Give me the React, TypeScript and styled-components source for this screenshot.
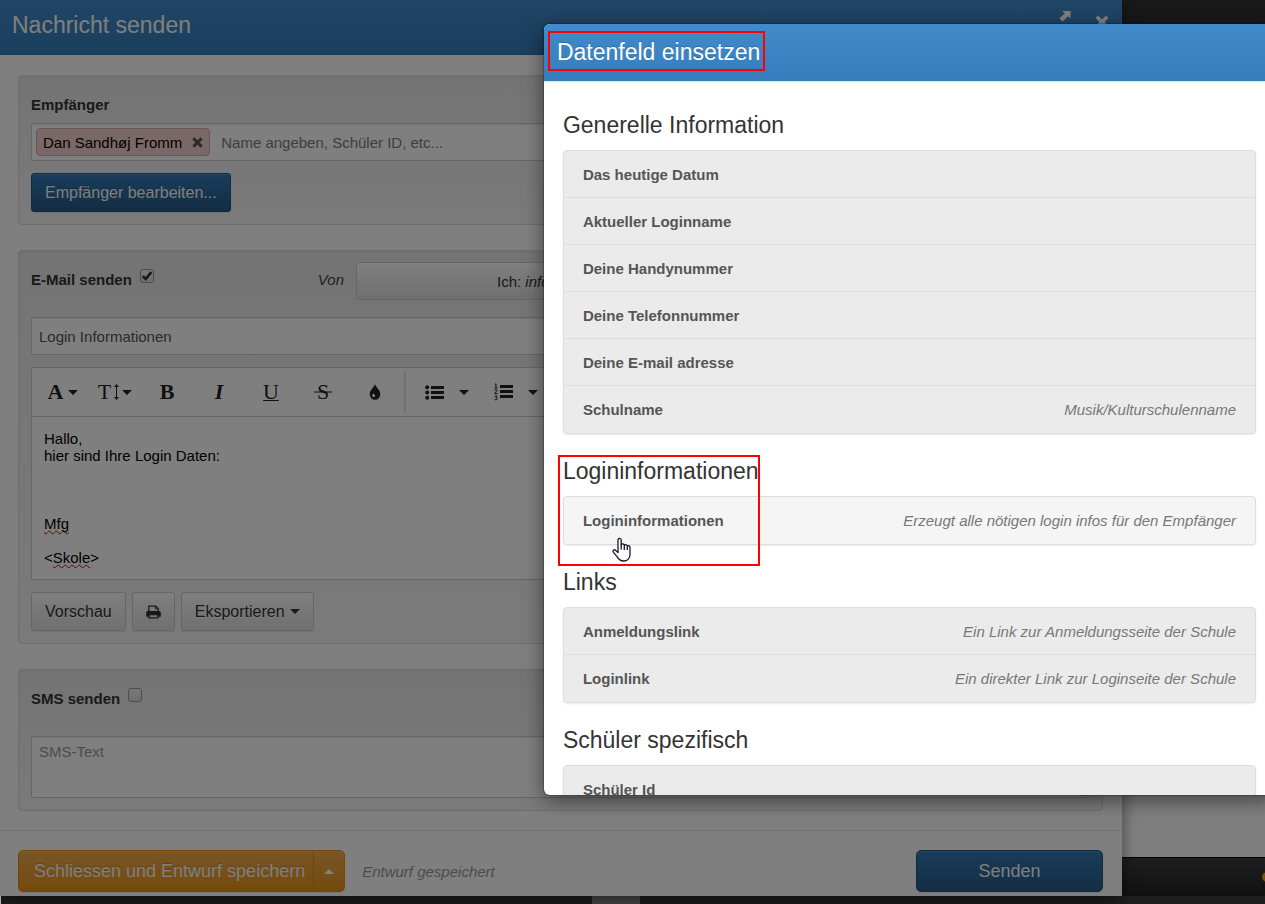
import React from "react";
import styled, { createGlobalStyle, css } from "styled-components";

const GlobalStyle = createGlobalStyle`
  *, *::before, *::after { box-sizing: border-box; }
  body {
    margin: 0;
    font-family: "Liberation Sans", Arial, sans-serif;
    font-size: 15px;
    line-height: 21px;
    color: #333;
    background: #1f1f1f;
  }
  button, input, textarea { font-family: inherit; font-size: inherit; }
`;

const Page = styled.div`
  display: flex;
  flex-direction: column;
  min-height: 100vh;
  overflow: hidden;
`;

const Stage = styled.div`
  position: relative;
  flex: 1;
  display: grid;
  grid-template-columns: minmax(0, 1fr) 143px;
  background: #fff;
`;

const Backdrop = styled.div`
  position: absolute;
  inset: 0;
  background: rgba(0, 0, 0, 0.5);
`;

/* ---------- page behind the windows ---------- */

const SiteColumn = styled.div`
  display: flex;
  flex-direction: column;
  justify-content: space-between;
  overflow: hidden;
`;

const SiteTop = styled.div`
  height: 56px;
  background: #323232;
`;

const SiteBottom = styled.div`
  display: flex;
  align-items: center;
  justify-content: flex-end;
  height: 39px;
  border-top: 1px solid #000;
  background: linear-gradient(#3e3e3e, #222);
`;

const StatusDot = styled.span`
  width: 10px;
  height: 10px;
  margin-right: -7px;
  border-radius: 5px;
  background: #f0a020;
`;

const Taskbar = styled.div`
  display: flex;
  justify-content: center;
  height: 8px;
  border-left: 1px solid #ccc;
  background: #1f1f1f;
`;

const TaskbarItem = styled.span`
  width: 48px;
  margin-right: 34px;
  background: #4b4b4b;
`;

/* ---------- message window ---------- */

const Window = styled.section`
  position: relative;
  display: flex;
  flex-direction: column;
  background: #fff;
  box-shadow: 0 5px 15px rgba(0, 0, 0, 0.5);
`;

const WindowHeader = styled.header`
  display: flex;
  justify-content: space-between;
  height: 55px;
  padding: 10px 13px 10px 12px;
  background: linear-gradient(#428bca, #357ebd);
  border-bottom: 1px solid #3577ac;
`;

const titleText = css`
  margin: 0;
  font-size: 23px;
  font-weight: 400;
  color: #fff;
`;

const WindowTitle = styled.h1`
  ${titleText}
  line-height: 30px;
`;

const WindowTools = styled.div`
  display: flex;
  align-items: flex-start;
  gap: 24px;
`;

const ToolButton = styled.button<{ $drop?: number }>`
  display: flex;
  margin: 0;
  padding: ${(p) => p.$drop ?? 0}px 0 0;
  border: 0;
  background: none;
  color: #fff;
`;

const WindowBody = styled.div`
  flex: 1;
  display: flex;
  flex-direction: column;
  gap: 25px;
  padding: 20px 19px 19px 18px;
`;

const Well = styled.div<{ $top?: number }>`
  display: flex;
  flex-direction: column;
  gap: 12px;
  padding: ${(p) => p.$top ?? 11}px 11px 12px 12px;
  border: 1px solid #dcdcdc;
  border-radius: 4px;
  background: linear-gradient(#e8e8e8, #f5f5f5);
  box-shadow: inset 0 1px 3px rgba(0, 0, 0, 0.05);
`;

const FieldGroup = styled.div`
  display: flex;
  flex-direction: column;
  gap: 8px;
`;

const FieldLabel = styled.label`
  font-weight: 700;
`;

const boxed = css`
  border: 1px solid #ccc;
  border-radius: 2px;
  background: #fff;
  box-shadow: inset 0 1px 1px rgba(0, 0, 0, 0.075);
`;

const TokenField = styled.div`
  ${boxed}
  display: flex;
  align-items: center;
  height: 38px;
  padding: 0 4px;
`;

const Token = styled.span`
  display: flex;
  align-items: center;
  gap: 10px;
  height: 28px;
  padding: 0 6px;
  border: 1px solid #d3aeac;
  border-radius: 4px;
  background: #f5d0ce;
  color: #000;
`;

const TokenRemove = styled.button`
  display: flex;
  padding: 0;
  border: 0;
  background: none;
  color: #555;
`;

const TokenInput = styled.input`
  flex: 1;
  min-width: 0;
  padding: 0 11px;
  border: 0;
  outline: 0;
  background: none;
  &::placeholder { color: #7c7c7c; }
`;

type Tone = "plain" | "primary" | "warning";

const tones = {
  plain: css`
    color: #333;
    border-color: #ccc;
    background: linear-gradient(#fff, #e0e0e0);
    text-shadow: 0 1px 0 #fff;
  `,
  primary: css`
    color: #fff;
    border-color: #245580;
    background: linear-gradient(#337ab7, #265a88);
    text-shadow: 0 -1px 0 rgba(0, 0, 0, 0.2);
  `,
  warning: css`
    color: #fff;
    border-color: #e38d13;
    background: linear-gradient(#f0ad4e, #eb9316);
    text-shadow: 0 -1px 0 rgba(0, 0, 0, 0.2);
  `,
};

const Button = styled.button<{ $tone: Tone; $large?: boolean }>`
  display: inline-flex;
  align-items: center;
  justify-content: center;
  gap: 5px;
  height: ${(p) => (p.$large ? 42 : 39)}px;
  padding: 0 ${(p) => (p.$large ? 15 : 13)}px;
  border: 1px solid;
  border-radius: ${(p) => (p.$large ? 5 : 3)}px;
  font-size: ${(p) => (p.$large ? 18 : 16)}px;
  white-space: nowrap;
  box-shadow: inset 0 1px 0 rgba(255, 255, 255, 0.15), 0 1px 1px rgba(0, 0, 0, 0.075);
  ${(p) => tones[p.$tone]}
`;

const ButtonRow = styled.div`
  display: flex;
  gap: 6px;
`;

const SwitchRow = styled.div`
  display: grid;
  grid-template-columns: minmax(0, 313px) minmax(0, 1fr);
  gap: 12px;
  min-height: 38px;
  margin-bottom: 5px;
`;

const SwitchLabels = styled.div`
  display: flex;
  justify-content: space-between;
  padding-top: 7px;
`;

const CheckLabel = styled.label`
  display: flex;
  align-items: flex-start;
  gap: 8px;
  font-weight: 700;
`;

const CheckWrap = styled.span`
  position: relative;
  display: flex;
  width: 14px;
  height: 14px;

  svg {
    position: absolute;
    left: 1px;
    top: 1px;
    pointer-events: none;
  }
`;

const CheckInput = styled.input`
  appearance: none;
  width: 14px;
  height: 14px;
  margin: 0;
  border: 1px solid #999;
  border-radius: 3px;
  background: linear-gradient(#f2f2f2, #dcdcdc);
`;

const SenderLabel = styled.em`
  color: #444;
`;

const SenderButton = styled.button`
  height: 38px;
  padding: 0 140px;
  border: 1px solid #ccc;
  border-radius: 2px;
  background: linear-gradient(#fff, #e0e0e0);
  color: #333;
  text-align: left;
`;

const TextInput = styled.input`
  ${boxed}
  width: 100%;
  height: 38px;
  padding: 0 7px;
  color: #555;
`;

const Editor = styled.div`
  border: 1px solid #ccc;
  border-radius: 2px;
  background: #fff;
`;

const Toolbar = styled.div`
  display: flex;
  align-items: center;
  height: 49px;
  padding-left: 5px;
  border-bottom: 1px solid #ccc;
  overflow: hidden;
`;

const FormatButton = styled.button<{ $wide?: boolean; $gap?: number }>`
  display: flex;
  flex: none;
  align-items: center;
  justify-content: center;
  gap: ${(p) => p.$gap ?? 5}px;
  width: ${(p) => (p.$wide ? 69 : 52)}px;
  height: 48px;
  padding: 0;
  border: 0;
  background: none;
  color: #222;
`;

const Glyph = styled.span<{ $bold?: boolean; $italic?: boolean; $line?: string }>`
  font-family: "Liberation Serif", "Times New Roman", serif;
  font-size: 22px;
  line-height: 24px;
  font-weight: ${(p) => (p.$bold ? 700 : 400)};
  font-style: ${(p) => (p.$italic ? "italic" : "normal")};
  text-decoration: ${(p) => p.$line ?? "none"};
  text-decoration-thickness: 1px;
`;

const ToolbarDivider = styled.span`
  flex: none;
  width: 2px;
  height: 42px;
  margin: 0 6px 0 3px;
  background: #e4e4e4;
`;

const EditorText = styled.div`
  padding: 13px 12px;
  line-height: 17px;
  color: #000;
  outline: 0;

  p { margin: 0; min-height: 17px; }
`;

const Misspelled = styled.span`
  text-decoration: underline wavy #e00000 1px;
  text-decoration-skip-ink: none;
`;

const TextArea = styled.textarea`
  ${boxed}
  display: block;
  width: 100%;
  height: 62px;
  padding: 4px 7px;
  line-height: 21px;
  &::placeholder { color: #999; }
`;

const WindowFooter = styled.footer`
  display: flex;
  align-items: center;
  gap: 17px;
  padding: 19px 19px 4px 18px;
  border-top: 1px solid #e0e0e0;
`;

const SplitButton = styled.div`
  display: flex;

  button:first-child {
    padding-right: 8px;
    border-radius: 5px 0 0 5px;
  }
  button:last-child {
    width: 32px;
    margin-left: -1px;
    padding: 0;
    border-radius: 0 5px 5px 0;
  }
`;

const DraftState = styled.em`
  flex: 1;
  color: #999;
`;

const SendButton = styled(Button)`
  width: 187px;
`;

/* ---------- data field dialog ---------- */

const Dialog = styled.section`
  position: absolute;
  top: 24px;
  right: -10px;
  bottom: 101px;
  left: 43%;
  display: flex;
  flex-direction: column;
  overflow: hidden;
  border-radius: 6px;
  background: #fff;
  box-shadow: 0 0 0 1px rgba(0, 0, 0, 0.2), 0 5px 20px rgba(0, 0, 0, 0.5);
`;

const DialogHeader = styled.header`
  flex: none;
  display: flex;
  padding: 7px 4px 10px;
  border-bottom: 1px solid #e5e5e5;
  background: linear-gradient(#428bca, #357ebd) padding-box;
`;

const DialogTitle = styled.h2`
  ${titleText}
  padding: 2px 3px 0 7px;
  border: 2px solid #f00;
  line-height: 34px;
  text-shadow: 0 -1px 0 rgba(0, 0, 0, 0.2);
`;

const DialogBody = styled.div`
  display: flex;
  flex-direction: column;
  gap: 22px;
  padding: 28px 19px 0;
`;

const Section = styled.section`
  position: relative;
  flex: none;
`;

const SectionTitle = styled.h3`
  margin: 0 0 10px;
  font-size: 23px;
  font-weight: 400;
  line-height: 30px;
`;

const FieldList = styled.ul`
  margin: 0;
  padding: 0;
  list-style: none;
  border: 1px solid #ddd;
  border-radius: 4px;
  background: #ebebeb;
  box-shadow: 0 1px 2px rgba(0, 0, 0, 0.075);
  overflow: hidden;
`;

const FieldItem = styled.li`
  & + & { box-shadow: 0 -1px 0 #ddd; }
`;

const FieldRow = styled.button<{ $hover?: boolean }>`
  display: flex;
  align-items: center;
  justify-content: space-between;
  width: 100%;
  height: 47px;
  padding: 0 19px;
  border: 0;
  background: ${(p) => (p.$hover ? "#f5f5f5" : "#ebebeb")};
  color: #555;
  cursor: pointer;
`;

const FieldHint = styled.em`
  color: #777;
`;

const Marker = styled.span`
  position: absolute;
  top: -1px;
  left: -5px;
  width: 202px;
  height: 111px;
  border: 2px solid #f00;
  pointer-events: none;
`;

const Pointer = styled.svg`
  position: absolute;
  top: 81px;
  left: 49px;
  pointer-events: none;
`;

/* ---------- icons ---------- */

const Caret = ({ up }: { up?: boolean }) => (
  <svg width="10" height="5" viewBox="0 0 10 5" fill="currentColor" aria-hidden="true">
    <path d={up ? "M0 5 5 0l5 5z" : "M0 0h10L5 5z"} />
  </svg>
);

const CrossIcon = ({ size }: { size: number }) => (
  <svg width={size} height={size} viewBox="0 0 12 12" aria-hidden="true">
    <path d="M1.500 1.500l9 9M10.500 1.500l-9 9" stroke="currentColor" strokeWidth="3.200" fill="none" />
  </svg>
);

const ExpandIcon = () => (
  <svg width="12" height="12" viewBox="0 0 12 12" fill="currentColor" aria-hidden="true">
    <path d="M3.200 1H11.500v7.600L9 6.200 3.600 11.600.400 8.400 5.800 3.200z" />
  </svg>
);

const HeightIcon = () => (
  <svg width="5" height="16" viewBox="0 0 5 16" fill="currentColor" aria-hidden="true">
    <path d="M2.500 0 5 3H3v10h2l-2.500 3L0 13h2V3H0z" />
  </svg>
);

const StrikeIcon = () => (
  <svg width="18" height="2" viewBox="0 0 18 2" aria-hidden="true">
    <path d="M0 1h18" stroke="currentColor" />
  </svg>
);

const StruckGlyph = styled.span`
  display: grid;
  place-items: center;

  > * { grid-area: 1 / 1; }
`;

const DropIcon = () => (
  <svg width="12" height="16" viewBox="0 0 12 16" fill="currentColor" aria-hidden="true">
    <path
      fillRule="evenodd"
      d="M6 0c.8 3.300 5.300 6 5.300 10.300A5.300 5.500 0 0 1 .7 10.300C.7 6 5.200 3.300 6 0zM4.500 9.200c-.7 1-1.300 1.500-1.300 2.400a1.500 1.500 0 0 0 3 0c0-.9-1.200-1.400-1.700-2.400z"
    />
  </svg>
);

const BulletsIcon = () => (
  <svg width="19" height="15" viewBox="0 0 19 15" fill="currentColor" aria-hidden="true">
    <circle cx="2.200" cy="2.200" r="2" />
    <circle cx="2.200" cy="7.500" r="2" />
    <circle cx="2.200" cy="12.800" r="2" />
    <path d="M6 1h13v3H6zM6 6h13v3H6zM6 11h13v3H6z" />
  </svg>
);

const NumbersIcon = () => (
  <svg width="19" height="18" viewBox="0 0 19 18" fill="none" stroke="currentColor" aria-hidden="true">
    <path d="M6 3.500h13M6 8.500h13M6 13.500h13" strokeWidth="3" />
    <path d="M.8 1.500 2 .8V5M.6 5h3M.6 7.300c.5-.8 2.400-.8 2.400.3 0 .8-2.300 1.900-2.300 2.900h3M.7 13h2.400l-1.200 1.500c1.800 0 1.600 2.400 0 2.400-.8 0-1.200-.3-1.400-.7" />
  </svg>
);

const PrintIcon = () => (
  <svg width="15" height="14" viewBox="0 0 16 14" aria-hidden="true">
    <path d="M3 6.500V.7h7.300L13 3.400v3.100" fill="none" stroke="currentColor" strokeWidth="1.400" />
    <path d="M10 .7v3h3" fill="none" stroke="currentColor" />
    <path
      fillRule="evenodd"
      fill="currentColor"
      d="M2 6h12a1.800 1.800 0 0 1 1.800 1.800V12h-2.300v2h-11v-2H.2V7.800A1.800 1.800 0 0 1 2 6zm2 4.500v2.200h8v-2.200z"
    />
  </svg>
);

const CheckMark = () => (
  <svg width="12" height="12" viewBox="0 0 12 12" aria-hidden="true">
    <path d="M1.800 6.200 4.800 9 10.300 2" fill="none" stroke="#333" strokeWidth="2.800" />
  </svg>
);

const HandPointer = () => (
  <Pointer width="20" height="26" viewBox="0 0 20 26" aria-hidden="true">
    <path
      d="M6 15.500V3.200C6 .7 9.200.7 9.200 3.200v4.600c.5-1.300 3-1.200 3.100.5.700-1 2.900-.7 3 .9.800-.8 2.700-.4 2.700 1.200v6.800c0 3.800-2.400 6.800-6.300 6.800-3.600 0-5.200-1.800-6.400-4.100L1.400 15.300c-1.200-2.200 1-3.200 2.300-1.900z"
      fill="#fff"
      stroke="#15152a"
      strokeWidth="1.300"
      strokeLinejoin="round"
    />
    <path d="M9.200 7.500v5M12.300 8.500V13M15.300 9.500V13" stroke="#15152a" strokeWidth="1.300" />
  </Pointer>
);

/* ---------- content ---------- */

type DataField = { name: string; hint?: string; hover?: boolean };
type DataGroup = { title: string; marked?: boolean; fields: DataField[] };

const groups: DataGroup[] = [
  {
    title: "Generelle Information",
    fields: [
      { name: "Das heutige Datum" },
      { name: "Aktueller Loginname" },
      { name: "Deine Handynummer" },
      { name: "Deine Telefonnummer" },
      { name: "Deine E-mail adresse" },
      { name: "Schulname", hint: "Musik/Kulturschulenname" },
    ],
  },
  {
    title: "Logininformationen",
    marked: true,
    fields: [
      {
        name: "Logininformationen",
        hint: "Erzeugt alle nötigen login infos für den Empfänger",
        hover: true,
      },
    ],
  },
  {
    title: "Links",
    fields: [
      { name: "Anmeldungslink", hint: "Ein Link zur Anmeldungsseite der Schule" },
      { name: "Loginlink", hint: "Ein direkter Link zur Loginseite der Schule" },
    ],
  },
  { title: "Schüler spezifisch", fields: [{ name: "Schüler Id" }] },
];

function FormatToolbar() {
  return (
    <Toolbar role="toolbar">
      <FormatButton type="button"><Glyph $bold>A</Glyph><Caret /></FormatButton>
      <FormatButton type="button" $gap={3}><Glyph>T</Glyph><HeightIcon /><Caret /></FormatButton>
      <FormatButton type="button"><Glyph $bold>B</Glyph></FormatButton>
      <FormatButton type="button"><Glyph $bold $italic>I</Glyph></FormatButton>
      <FormatButton type="button"><Glyph $line="underline">U</Glyph></FormatButton>
      <FormatButton type="button">
        <StruckGlyph>
          <Glyph>S</Glyph>
          <StrikeIcon />
        </StruckGlyph>
      </FormatButton>
      <FormatButton type="button"><DropIcon /></FormatButton>
      <ToolbarDivider />
      <FormatButton type="button" $wide $gap={15}><BulletsIcon /><Caret /></FormatButton>
      <FormatButton type="button" $wide $gap={15}><NumbersIcon /><Caret /></FormatButton>
    </Toolbar>
  );
}

function MessageWindow() {
  return (
    <Window>
      <WindowHeader>
        <WindowTitle>Nachricht senden</WindowTitle>
        <WindowTools>
          <ToolButton type="button" aria-label="Vergrößern"><ExpandIcon /></ToolButton>
          <ToolButton type="button" aria-label="Schliessen" $drop={5}><CrossIcon size={14} /></ToolButton>
        </WindowTools>
      </WindowHeader>

      <WindowBody>
        <Well $top={18}>
          <FieldGroup>
            <FieldLabel htmlFor="recipients">Empfänger</FieldLabel>
            <TokenField>
              <Token>
                Dan Sandhøj Fromm
                <TokenRemove type="button" aria-label="Entfernen"><CrossIcon size={11} /></TokenRemove>
              </Token>
              <TokenInput id="recipients" placeholder="Name angeben, Schüler ID, etc..." />
            </TokenField>
          </FieldGroup>
          <ButtonRow>
            <Button type="button" $tone="primary">Empfänger bearbeiten...</Button>
          </ButtonRow>
        </Well>

        <Well>
          <SwitchRow>
            <SwitchLabels>
              <CheckLabel>
                E-Mail senden
                <CheckWrap>
                  <CheckInput type="checkbox" defaultChecked />
                  <CheckMark />
                </CheckWrap>
              </CheckLabel>
              <SenderLabel>Von</SenderLabel>
            </SwitchLabels>
            <SenderButton type="button">Ich: <em>info</em></SenderButton>
          </SwitchRow>
          <TextInput aria-label="Betreff" defaultValue="Login Informationen" />
          <Editor>
            <FormatToolbar />
            <EditorText role="textbox" contentEditable suppressContentEditableWarning spellCheck={false}>
              <p>Hallo,</p>
              <p>hier sind Ihre Login Daten:</p>
              <p />
              <p />
              <p />
              <p><Misspelled>Mfg</Misspelled></p>
              <p />
              <p>&lt;<Misspelled>Skole</Misspelled>&gt;</p>
            </EditorText>
          </Editor>
          <ButtonRow>
            <Button type="button" $tone="plain">Vorschau</Button>
            <Button type="button" $tone="plain" aria-label="Drucken"><PrintIcon /></Button>
            <Button type="button" $tone="plain">Eksportieren <Caret /></Button>
          </ButtonRow>
        </Well>

        <Well>
          <SwitchRow>
            <SwitchLabels>
              <CheckLabel>
                SMS senden
                <CheckWrap>
                  <CheckInput type="checkbox" />
                </CheckWrap>
              </CheckLabel>
            </SwitchLabels>
          </SwitchRow>
          <TextArea aria-label="SMS-Text" placeholder="SMS-Text" />
        </Well>
      </WindowBody>

      <WindowFooter>
        <SplitButton>
          <Button type="button" $tone="warning" $large>Schliessen und Entwurf speichern</Button>
          <Button type="button" $tone="warning" $large aria-label="Mehr"><Caret up /></Button>
        </SplitButton>
        <DraftState>Entwurf gespeichert</DraftState>
        <SendButton type="button" $tone="primary" $large>Senden</SendButton>
      </WindowFooter>
    </Window>
  );
}

function DataFieldDialog() {
  return (
    <Dialog role="dialog" aria-labelledby="data-field-title">
      <DialogHeader>
        <DialogTitle id="data-field-title">Datenfeld einsetzen</DialogTitle>
      </DialogHeader>
      <DialogBody>
        {groups.map((group) => (
          <Section key={group.title}>
            <SectionTitle>{group.title}</SectionTitle>
            <FieldList>
              {group.fields.map((field) => (
                <FieldItem key={field.name}>
                  <FieldRow type="button" $hover={field.hover}>
                    <strong>{field.name}</strong>
                    {field.hint && <FieldHint>{field.hint}</FieldHint>}
                  </FieldRow>
                </FieldItem>
              ))}
            </FieldList>
            {group.marked && <Marker />}
            {group.marked && <HandPointer />}
          </Section>
        ))}
      </DialogBody>
    </Dialog>
  );
}

export default function App() {
  return (
    <>
      <GlobalStyle />
      <Page>
        <Stage>
          <MessageWindow />
          <SiteColumn>
            <SiteTop />
            <SiteBottom><StatusDot /></SiteBottom>
          </SiteColumn>
          <Backdrop />
          <DataFieldDialog />
        </Stage>
        <Taskbar><TaskbarItem /></Taskbar>
      </Page>
    </>
  );
}
